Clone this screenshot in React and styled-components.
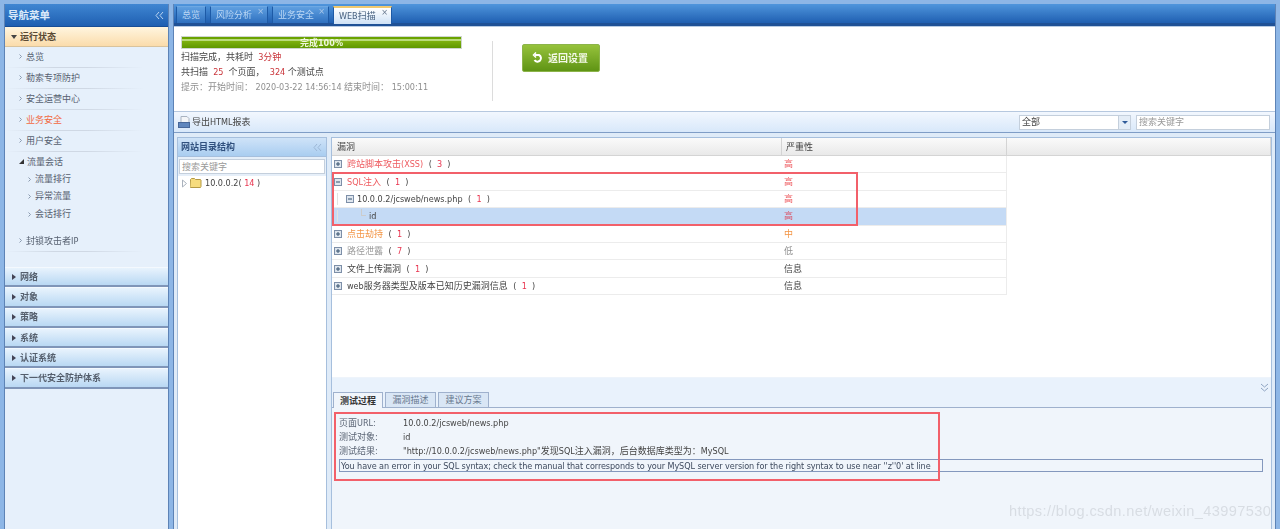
import React from "react";
import styled, { createGlobalStyle } from "styled-components";

const Global = createGlobalStyle`
  html, body { margin: 0; padding: 0; height: 529px; overflow: hidden; background: #8db6e6; }
  * { box-sizing: border-box; }
  #root { font: 9px/12px "DejaVu Sans", "Noto Sans CJK SC", sans-serif; font-stretch: condensed; color: #444; }
`;
const Page = styled.div`
  position: relative; display: flex; gap: 4px; height: 529px; padding: 4px 4px 0 4px; filter: blur(0.4px);
`;
const Sidebar = styled.aside`
  width: 165px; flex: none; display: flex; flex-direction: column;
  background: #e6f0fb; border: 1px solid #5d83b6; border-top: 0; border-bottom: 0;
`;
const NavHeader = styled.div`
  height: 23px; flex: none; display: flex; align-items: center; justify-content: space-between; padding: 0 4px 0 3px;
  background: linear-gradient(#3f86d2, #1f5fb1); border-bottom: 1px solid #174d96;
  color: #dceafa; font-size: 10.5px; font-weight: 700;
`;
const Collapse = styled.svg`
  width: 9px; height: 9px; fill: none; stroke: ${p => p.$c || "#b9d3f0"}; stroke-width: 1;
`;
const ActiveGroup = styled.div`
  height: 20px; flex: none; display: flex; align-items: center; gap: 3px; padding-left: 6px; font-weight: 700; color: #5a4a34;
  background: linear-gradient(#fff5df, #fbdcab); border-bottom: 1px solid #d9c39d;
`;
const Tri = styled.span`
  width: 0; height: 0; flex: none;
  ${p => p.$down
    ? "border-left:3px solid transparent;border-right:3px solid transparent;border-top:4px solid #444;"
    : "border-top:3px solid transparent;border-bottom:3px solid transparent;border-left:4px solid #445;"}
`;
const NavList = styled.div` flex: none; height: 220px; display: flex; flex-direction: column; `;
const NavItem = styled.div`
  height: ${p => p.$h || 21}px; flex: none; display: flex; align-items: center; gap: 4px; padding-left: ${p => p.$sub ? 23 : 14}px;
  color: ${p => p.$hot ? "#f2693f" : "#566070"};
  ${p => p.$line && "padding-bottom: 2px; background: linear-gradient(90deg,#e6f0fb,#cfd8e4 30%,#cfd8e4 50%,#e6f0fb 85%) bottom/100% 1px no-repeat;"}
`;
const Chev = styled.svg` width: 3px; height: 5px; fill: none; stroke: #8b9bb0; stroke-width: 1; flex: none; `;
const Corner = styled.span`
  width: 0; height: 0; flex: none; border-left: 5px solid transparent; border-bottom: 5px solid #333; margin-right: -1px;
`;
const Spacer = styled.div` flex: none; height: ${p => p.$h}px; `;
const Accordion = styled.div`
  height: 20.3px; flex: none; display: flex; align-items: center; gap: 4px; padding-left: 7px; font-weight: 700; color: #555f6d;
  background: linear-gradient(#e8f3fd, #b9d8f3); border-bottom: 2px solid #7f95b8; border-top: 1px solid #f4f9fe;
`;
const Main = styled.main`
  flex: 1; min-width: 0; display: flex; flex-direction: column; background: #dfebf8; border: 1px solid #5d83b6; border-top: 0; border-bottom: 0;
`;
const TabBar = styled.div`
  height: 22px; flex: none; display: flex; align-items: flex-end; gap: 4px; padding-left: 2px;
  background: linear-gradient(#4f95dc, #1f5fb1); border-bottom: 3px solid #1f5196;
`;
const Tab = styled.div`
  position: relative; height: ${p => p.$on ? 18 : 17}px; width: ${p => p.$w}px; padding: 2px 0 0 5px;
  border: 1px solid #1d5aa6; border-bottom: 0; margin-bottom: ${p => p.$on ? -1 : 0}px;
  background: ${p => p.$on ? "linear-gradient(#fff,#cfe2f6)" : "linear-gradient(#5f9fe0,#2e70bf)"};
  border-top: ${p => p.$on ? "2px solid #f0c96f" : "1px solid #6ea8e2"};
  color: ${p => p.$on ? "#46607f" : "#bcd8f5"};
`;
const TabClose = styled.span`
  position: absolute; right: 3px; top: 0; font-size: 9px; line-height: 9px; color: ${p => p.$on ? "#6a7a90" : "#a9c8ea"};
`;
const Summary = styled.section`
  height: 86px; flex: none; background: #fff; display: flex; padding: 9px 0 0 7px; border-bottom: 1px solid #b6c8df; border-top: 1px solid #b7cbe3;
`;
const ScanInfo = styled.div` width: 311px; flex: none; display: flex; flex-direction: column; `;
const Progress = styled.div`
  width: 281px; height: 13px; flex: none; border: 1px solid #cfd6cf; display: flex; align-items: center; justify-content: center;
  background: linear-gradient(#6aa300 0 15%, #b9db7a 15% 35%, #7fb20f 35%, #5f9800); color: #eef6dc; font-weight: 700; font-size: 9px;
`;
const InfoLine = styled.div` height: 15px; display: flex; align-items: center; white-space: pre; color: ${p => p.$muted ? "#8f8f8f" : "#444"}; `;
const Red = styled.span` color: ${p => p.$c || "#c9343a"}; `;
const Divider = styled.div` width: 1px; height: 60px; margin-top: 5px; flex: none; background: #dcdcdc; `;
const ReturnButton = styled.div`
  width: 78px; height: 28px; margin: 8px 0 0 29px; flex: none; display: flex; align-items: center; gap: 4px; padding-left: 8px; border-radius: 2px;
  background: linear-gradient(#96c23c, #5f9414); border: 1px solid #8cb44a; color: #f3f8e6; font-weight: 700; font-family: "Noto Sans CJK SC", sans-serif; font-size: 10px;
`;
const Toolbar = styled.div`
  height: 21px; flex: none; display: flex; align-items: center; padding: 0 5px 0 4px; gap: 1px;
  background: linear-gradient(#f2f7fe, #d8e8fa); border-bottom: 1px solid #7f9dc6;
`;
const ToolIcon = styled.svg` width: 13px; height: 13px; flex: none; `;
const Fill = styled.div` flex: 1; `;
const SelectBox = styled.div`
  width: 112px; height: 15px; display: flex; background: #fff; border: 1px solid #c4cfdc; margin-right: 4px; color: #444; align-items: center; padding-left: 2px;
`;
const SelectArrow = styled.div`
  margin-left: auto; width: 12px; height: 13px; background: #e4edf7; border-left: 1px solid #c4cfdc; display: flex; align-items: center; justify-content: center;
  &::after { content: ""; border-left: 3px solid transparent; border-right: 3px solid transparent; border-top: 3px solid #2f5b99; }
`;
const SearchInput = styled.div`
  width: ${p => p.$w || 134}px; height: 15px; flex: none; background: #fff; border: 1px solid #c4cfdc; color: #9a9a9a; padding: 0 2px; display: flex; align-items: center;
`;
const Work = styled.div` flex: 1; min-height: 0; display: flex; gap: 4px; padding: 4px 3px 0 3px; `;
const TreePanel = styled.div`
  width: 150px; flex: none; background: #fff; border: 1px solid #a6bfdd; border-bottom: 0; display: flex; flex-direction: column;
`;
const TreeHeader = styled.div`
  height: 19px; flex: none; display: flex; align-items: center; justify-content: space-between; padding: 0 4px 0 3px; font-weight: 700; color: #30507e;
  background: linear-gradient(#cfe3f8, #a9cdf0); border-bottom: 1px solid #a6bfdd;
`;
const TreeSearch = styled.div` height: 19px; flex: none; padding: 2px 1px; background: #e6eff9; `;
const TreeRow = styled.div` height: 14px; display: flex; align-items: center; padding-left: 4px; gap: 3px; color: #444; `;
const Count = styled.span` color: #e8344f; `;
const Right = styled.div` flex: 1; min-width: 0; display: flex; flex-direction: column; border: 1px solid #a6bfdd; border-bottom: 0; background: #fff; `;
const TableArea = styled.div` height: 239px; flex: none; `;
const Row = styled.div` display: flex; height: ${p => p.$h || 17.4}px; width: 675px; `;
const HeadCell = styled.div`
  width: ${p => p.$w}px; height: 100%; flex: ${p => p.$grow ? 1 : "none"}; display: flex; align-items: center; padding-left: ${p => p.$pl}px;
  background: linear-gradient(#fafafa, #e9e9e9); border-right: 1px solid #d4d4d4; border-bottom: 1px solid #d4d4d4; color: #444;
`;
const HeadRow = styled.div` display: flex; height: 18px; `;
const Cell = styled.div`
  width: ${p => p.$w}px; height: 100%; flex: none; display: flex; align-items: center; gap: 3px; white-space: pre;
  padding-left: ${p => p.$pl || 0}px; border-bottom: 1px solid #ececec;
  ${p => p.$end && "border-right: 1px solid #ececec;"}
  background: ${p => p.$sel ? "#c4daf5" : "#fff"}; color: ${p => p.$c || "#444"};
`;
const Expander = styled.svg` width: 8px; height: 8px; flex: none; margin-right: ${p => p.$mr}px; `;
const Guide = styled.span` width: 1px; height: 12px; flex: none; background: #e2e2e2; margin-right: ${p => p.$mr}px; `;
const Elbow = styled.span`
  width: 5px; height: 7px; flex: none; margin-top: -7px; border-left: 1px solid #ccc; border-bottom: 1px solid #ccc;
`;
const Detail = styled.div` flex: 1; min-height: 0; background: #f0f5fb; display: flex; flex-direction: column; `;
const DetailTabs = styled.div`
  position: relative; height: 31px; flex: none; display: flex; align-items: flex-end; gap: 2px; padding-left: 1px;
  background: #e9f2fc; border-bottom: 1px solid #9fb1cd; border-top: 1px solid #eef4fb;
`;
const DTab = styled.div`
  height: ${p => p.$on ? 16 : 15}px; width: ${p => p.$w}px; display: flex; align-items: center; justify-content: center; margin-bottom: ${p => p.$on ? -1 : 0}px;
  border: 1px solid #9fb1cd; border-bottom: 0; background: ${p => p.$on ? "#f0f5fb" : "#d9e6f5"};
  color: ${p => p.$on ? "#333" : "#68788e"}; font-weight: ${p => p.$on ? 700 : 400};
`;
const Down = styled.svg` position: absolute; right: 2px; top: 5px; width: 9px; height: 9px; fill: none; stroke: #8fa4c2; stroke-width: 1; `;
const DetailBody = styled.div` padding: 8px 7px 0 7px; display: flex; flex-direction: column; `;
const KV = styled.div` display: flex; height: 14px; align-items: center; white-space: pre; color: #444; `;
const K = styled.span` width: 64px; flex: none; color: #5a6474; `;
const ErrorBox = styled.div`
  height: 13px; margin: 1px 1px 0 0; padding: 0 1px; display: flex; align-items: center; white-space: pre; border: 1px solid #8498bd; color: #3e4a5e; letter-spacing: -.08px;
`;
const Highlight = styled.div`
  position: absolute; left: ${p => p.$x}px; top: ${p => p.$y}px; width: ${p => p.$w}px; height: ${p => p.$h}px; border: 2px solid #f2606a; pointer-events: none;
`;
const Watermark = styled.div`
  position: absolute; left: 1009px; top: 501px; font: 14.6px/20px "Liberation Sans", sans-serif; letter-spacing: .38px; color: rgba(120,125,135,.2); pointer-events: none; white-space: nowrap;
`;

const L2 = () => <Collapse viewBox="0 0 9 9"><path d="M4 1 1 4.500 4 8M8 1 5 4.500 8 8" /></Collapse>;
const C = () => <Chev viewBox="0 0 3 5"><path d="M.5.500 2.500 2.500.5 4.500" /></Chev>;
const Plus = ({ open, mr = 3 }) => (
  <Expander $mr={mr} viewBox="0 0 8 8">
    <rect x=".5" y=".5" width="7" height="7" fill="#dfe6ee" stroke="#7d8fa8" />
    <path d={open ? "M2 4h4" : "M2 4h4M4 2v4"} stroke="#35506f" fill="none" />
  </Expander>
);
const N = ({ children }) => <Count> {children} </Count>;

const rows = [
  { t: "跨站脚本攻击(XSS)", c: "#ee5a5f", n: 3, s: "高", sc: "#ee5a5f" },
  { t: "SQL注入", c: "#ee5a5f", n: 1, s: "高", sc: "#ee5a5f", open: true },
  { t: "10.0.0.2/jcsweb/news.php", n: 1, s: "高", sc: "#ee5a5f", open: true, level: 2 },
  { t: "id", s: "高", sc: "#d9556a", leaf: true, sel: true },
  { t: "点击劫持", c: "#f39545", n: 1, s: "中", sc: "#f39545" },
  { t: "路径泄露", c: "#9a9a9a", n: 7, s: "低", sc: "#8f8f8f" },
  { t: "文件上传漏洞", n: 1, s: "信息" },
  { t: "web服务器类型及版本已知历史漏洞信息", n: 1, s: "信息" },
];

export default function App() {
  return (
    <>
      <Global />
      <Page>
        <Sidebar>
          <NavHeader>导航菜单<L2 /></NavHeader>
          <ActiveGroup><Tri $down />运行状态</ActiveGroup>
          <NavList>
            <NavItem $line><C />总览</NavItem>
            <NavItem $line><C />勒索专项防护</NavItem>
            <NavItem $line><C />安全运营中心</NavItem>
            <NavItem $line $hot><C />业务安全</NavItem>
            <NavItem $line><C />用户安全</NavItem>
            <NavItem $h={19}><Corner />流量会话</NavItem>
            <NavItem $sub $h={16}><C />流量排行</NavItem>
            <NavItem $sub $h={18}><C />异常流量</NavItem>
            <NavItem $sub $h={18}><C />会话排行</NavItem>
            <Spacer $h={8} />
            <NavItem $line><C />封锁攻击者IP</NavItem>
          </NavList>
          {["网络", "对象", "策略", "系统", "认证系统", "下一代安全防护体系"].map(t => (
            <Accordion key={t}><Tri />{t}</Accordion>
          ))}
        </Sidebar>
        <Main>
          <TabBar>
            <Tab $w={30}>总览</Tab>
            <Tab $w={58}>风险分析<TabClose>×</TabClose></Tab>
            <Tab $w={57}>业务安全<TabClose>×</TabClose></Tab>
            <Tab $w={59} $on>WEB扫描<TabClose $on>×</TabClose></Tab>
          </TabBar>
          <Summary>
            <ScanInfo>
              <Progress>完成100%</Progress>
              <InfoLine>扫描完成，共耗时  <Red>3分钟</Red></InfoLine>
              <InfoLine>共扫描  <Red>25</Red>  个页面，  <Red>324</Red> 个测试点</InfoLine>
              <InfoLine $muted>提示：开始时间： 2020-03-22 14:56:14 结束时间： 15:00:11</InfoLine>
            </ScanInfo>
            <Divider />
            <ReturnButton>
              <svg width="13" height="13" viewBox="0 0 13 13" fill="none" stroke="#fff" strokeWidth="2">
                <path d="M4 3h4a3.500 3.500 0 1 1-4.500 5" />
                <path d="M5 .5 2.500 3 5 5.500" strokeWidth="1.500" />
              </svg>
              返回设置
            </ReturnButton>
          </Summary>
          <Toolbar>
            <ToolIcon viewBox="0 0 13 13">
              <path d="M3 .5h6l2 2v5H3z" fill="#f3f5f8" stroke="#a9b3c0" />
              <rect x=".5" y="6.500" width="11" height="5" fill="#5f86bd" stroke="#48689a" />
            </ToolIcon>
            导出HTML报表
            <Fill />
            <SelectBox>全部<SelectArrow /></SelectBox>
            <SearchInput>搜索关键字</SearchInput>
          </Toolbar>
          <Work>
            <TreePanel>
              <TreeHeader>网站目录结构<Collapse $c="#9db7d6" viewBox="0 0 9 9"><path d="M4 1 1 4.500 4 8M8 1 5 4.500 8 8" /></Collapse></TreeHeader>
              <TreeSearch><SearchInput $w={146}>搜索关键字</SearchInput></TreeSearch>
              <TreeRow>
                <svg width="5" height="9" viewBox="0 0 5 9"><path d="M.5 1 4.500 4.500.5 8z" fill="#fff" stroke="#aab2bd" /></svg>
                <svg width="12" height="10" viewBox="0 0 12 10">
                  <path d="M.5 2V1.500l1-1h3l1 1h5l.5.500v6.500l-.5 1h-10l-.5-1z" fill="#f6dc7e" stroke="#b49a45" />
                </svg>
                <span>10.0.0.2( <Count>14</Count> )</span>
              </TreeRow>
            </TreePanel>
            <Right>
              <TableArea>
                <HeadRow>
                  <HeadCell $w={450} $pl={5}>漏洞</HeadCell>
                  <HeadCell $w={225} $pl={4}>严重性</HeadCell>
                  <HeadCell $grow />
                </HeadRow>
                {rows.map(r => (
                  <Row key={r.t}>
                    <Cell $w={450} $sel={r.sel} $pl={r.leaf || r.level ? 5 : 2} $c={r.c}>
                      {r.leaf && <Guide $mr={20} />}
                      {r.level && <Guide $mr={5} />}
                      {r.leaf ? <Elbow /> : <Plus open={r.open} mr={r.level ? 0 : 2} />}
                      <span>{r.t}</span>
                      {r.n && <span style={{ color: "#444" }}> ( <N>{r.n}</N> )</span>}
                    </Cell>
                    <Cell $w={225} $end $sel={r.sel} $pl={2} $c={r.sc}>{r.s}</Cell>
                  </Row>
                ))}
              </TableArea>
              <Detail>
                <DetailTabs>
                  <DTab $on $w={50}>测试过程</DTab>
                  <DTab $w={51}>漏洞描述</DTab>
                  <DTab $w={51}>建议方案</DTab>
                  <Down viewBox="0 0 9 9"><path d="M1 1 4.500 4 8 1M1 5 4.500 8 8 5" /></Down>
                </DetailTabs>
                <DetailBody>
                  <KV><K>页面URL:</K>10.0.0.2/jcsweb/news.php</KV>
                  <KV><K>测试对象:</K>id</KV>
                  <KV><K>测试结果:</K>"http://10.0.0.2/jcsweb/news.php"发现SQL注入漏洞，后台数据库类型为：MySQL</KV>
                  <ErrorBox>You have an error in your SQL syntax; check the manual that corresponds to your MySQL server version for the right syntax to use near ''z''0' at line</ErrorBox>
                </DetailBody>
              </Detail>
            </Right>
          </Work>
        </Main>
        <Highlight $x={332} $y={172} $w={526} $h={54} />
        <Highlight $x={334} $y={412} $w={606} $h={69} />
        <Watermark>https://blog.csdn.net/weixin_43997530</Watermark>
      </Page>
    </>
  );
}
